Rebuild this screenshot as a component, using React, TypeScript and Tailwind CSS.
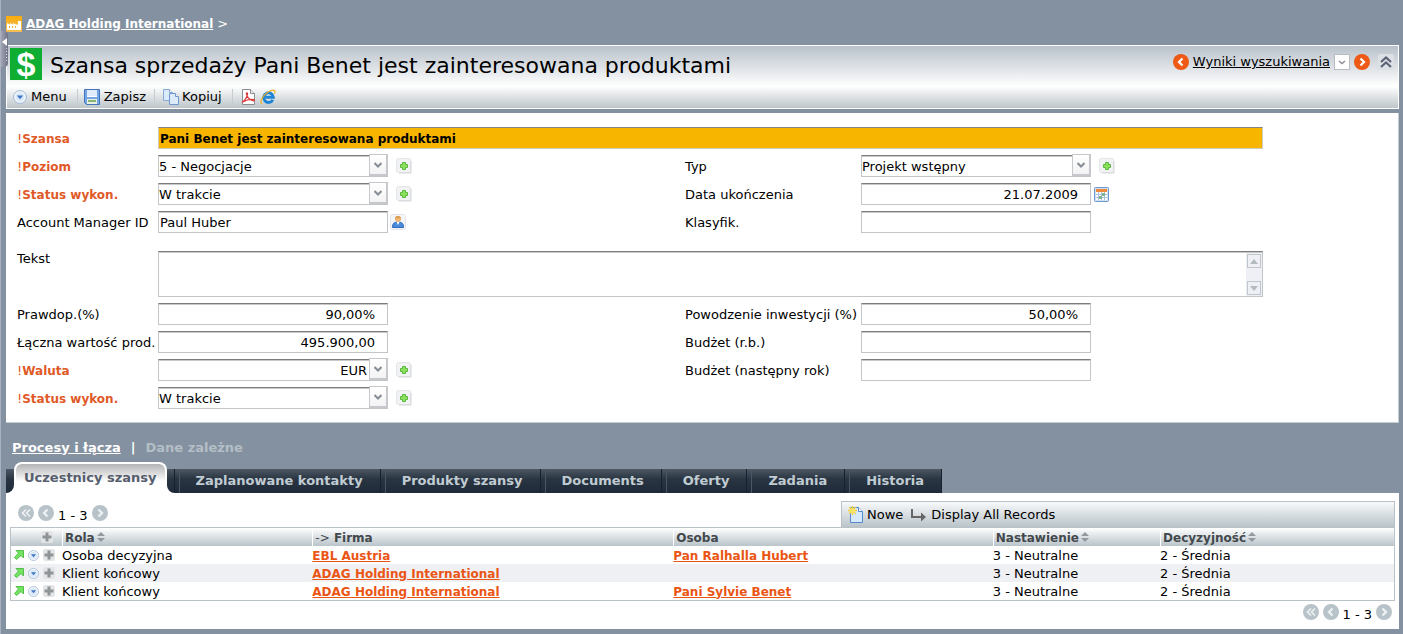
import { useState, type ReactNode } from "react";

function FactoryIcon() {
  return (
    <svg width="16" height="16" viewBox="0 0 16 16" aria-hidden="true">
      <defs>
        <linearGradient id="factory" x1="0" y1="0" x2="0" y2="1">
          <stop offset="0" stopColor="#f7ab0c" />
          <stop offset="1" stopColor="#f5bd55" />
        </linearGradient>
      </defs>
      <rect width="16" height="16" fill="url(#factory)" />
      <path d="M1 14V7l3 1.500V7l3 1.500V7l3 1.500h2V5h3v9z" fill="#fff" />
      <path d="M3 10h1v2H3zM6 10h1v2H6zM9 10h1v2H9z" fill="#f3ae33" />
    </svg>
  );
}

function RoundMenuIcon({ size = 14 }: { size?: number }) {
  return (
    <svg width={size} height={size} viewBox="0 0 14 14" aria-hidden="true">
      <circle cx="7" cy="7" r="6.400" fill="#f3f8fd" stroke="#9fb6d2" />
      <circle cx="7" cy="7" r="4.500" fill="#dbe8f7" />
      <path d="M3.800 5.500h6.400L7 9.200z" fill="#3f74c4" />
    </svg>
  );
}

function SaveIcon() {
  return (
    <svg width="16" height="16" viewBox="0 0 16 16" aria-hidden="true">
      <path d="M.5.5h15v15h-13l-2-2z" fill="#74a6e6" stroke="#4274bb" />
      <rect x="3" y="1" width="10" height="6" fill="#dfeafa" />
      <path d="M3 7.500h10" stroke="#fff" />
      <rect x="3" y="10" width="10" height="5" fill="#e9efe4" />
      <rect x="4" y="11" width="8" height="2" fill="#86b56f" />
    </svg>
  );
}

function CopyIcon() {
  return (
    <svg width="17" height="16" viewBox="0 0 17 16" aria-hidden="true">
      <path d="M.5.5h6l3 3v8h-9z" fill="#dcebfb" stroke="#86a9d8" />
      <path d="M6.500.5v3h3" fill="#fff" stroke="#86a9d8" />
      <path d="M6.500 4.500h6l3 3v8h-9z" fill="#dcebfb" stroke="#7196cc" />
      <path d="M12.500 4.500v3h3" fill="#fff" stroke="#7196cc" />
    </svg>
  );
}

function PdfIcon() {
  return (
    <svg width="15" height="16" viewBox="0 0 15 16" aria-hidden="true">
      <path d="M1.500.5h8l4 4v11h-12z" fill="#fff" stroke="#8e8e92" />
      <path d="M9.500.5v4h4" fill="#eee" stroke="#8e8e92" />
      <path
        d="M.8 13.200C3 12.500 6.200 8.500 6.600 5c.1-1.600-1.500-1.500-1.200 0C6 8 9 11.500 12.500 11.800c1.400 0 1.300-1.200-.2-1.300-3.500-.2-8 1-10.500 2.500"
        fill="none"
        stroke="#e0373b"
        strokeWidth="1.200"
      />
    </svg>
  );
}

function BrowserIcon() {
  return (
    <svg width="16" height="16" viewBox="0 0 16 16" aria-hidden="true">
      <path
        d="M12.800 10.800A4.800 4.800 0 1 1 13.300 8.300H5.500"
        fill="none"
        stroke="#1f84d6"
        strokeWidth="3"
      />
      <path
        d="M2.200 14.600C-.6 13.400 1.700 8.300 6 4.600 10 1.200 14.700.2 15 2.300c.1.900-.3 1.700-.7 2.300"
        fill="none"
        stroke="#eeb21d"
        strokeWidth="1.200"
      />
    </svg>
  );
}

function CircleArrow({ dir, tone }: { dir: "left" | "right" | "first"; tone: "orange" | "grey" }) {
  const shapes = {
    left: "M9.500 4.500 6 8l3.500 3.500",
    right: "M6.500 4.500 10 8l-3.500 3.500",
    first: "M8 4.500 4.500 8 8 11.500M12 4.500 8.500 8l3.500 3.500",
  };
  return (
    <svg width="16" height="16" viewBox="0 0 16 16" aria-hidden="true">
      <circle cx="8" cy="8" r="8" fill={tone === "orange" ? "#ee5a16" : "#b8c3c9"} />
      <path
        d={shapes[dir]}
        fill="none"
        stroke={tone === "orange" ? "#fff" : "#eef2f4"}
        strokeWidth={dir === "first" ? 1.6 : 2.2}
      />
    </svg>
  );
}

function CollapseIcon() {
  return (
    <svg width="16" height="16" viewBox="0 0 16 16" aria-hidden="true">
      <rect width="16" height="16" rx="2" fill="#dde1e6" />
      <path d="m3 8 5-4.500L13 8M3 13l5-4.500L13 13" fill="none" stroke="#5c6377" strokeWidth="2.200" />
    </svg>
  );
}

function PlusIcon() {
  return (
    <svg width="16" height="16" viewBox="0 0 16 16" aria-hidden="true">
      <rect x=".5" y=".5" width="14" height="14" rx="2" fill="#f1f2f4" stroke="#e3e5e8" />
      <path d="M15 3v12H3" fill="none" stroke="#d2d5d9" />
      <path d="M6.500 4.500h3v2h2v3h-2v2h-3v-2h-2v-3h2z" fill="#8be05c" stroke="#5cb83f" />
    </svg>
  );
}

function PersonIcon() {
  return (
    <svg width="16" height="16" viewBox="0 0 16 16" aria-hidden="true">
      <rect x=".5" y=".5" width="15" height="15" rx="2" fill="#f4f5f8" stroke="#e2e4ea" />
      <path d="M2.500 13.500c0-4 1.500-5.500 5.500-5.500s5.500 1.500 5.500 5.500z" fill="#4b8bdc" stroke="#2f6abb" />
      <path d="M6.500 8h3L8 11z" fill="#fff" />
      <circle cx="8" cy="5" r="3" fill="#f0b878" />
      <path d="M5 5a3 3 0 0 1 6 0C9.500 4 7 3.600 5 5z" fill="#dc9a4c" />
    </svg>
  );
}

function CalendarIcon() {
  return (
    <svg width="15" height="15" viewBox="0 0 15 15" aria-hidden="true">
      <rect x=".5" y=".5" width="14" height="14" rx="1" fill="#cfe0f5" stroke="#6d97cf" />
      <rect x="2" y="2" width="11" height="3" fill="#ef8a3c" />
      <path d="M2 5h11v8H2z" fill="#fff" />
      <path d="M2 7.500h11M2 10.500h11M4.500 5v8M7.500 5v8M10.500 5v8" stroke="#a9c0da" />
      <path d="M5 9h3v3H5zM8 6h3v3H8z" fill="#69a877" fillOpacity=".8" />
    </svg>
  );
}

function NewPageIcon() {
  return (
    <svg width="15" height="17" viewBox="0 0 15 17" aria-hidden="true">
      <path d="M2.500 1.500h8l4 4v11h-12z" fill="#d6e8fb" stroke="#5588cc" />
      <path d="M10.500 1.500v4h4" fill="#fff" stroke="#5588cc" />
      <path d="M4.500 0v9M0 4.500h9M1.300 1.300l6.400 6.400M7.700 1.300 1.300 7.700" stroke="#f5d23c" strokeWidth="1.400" />
      <circle cx="4.500" cy="4.500" r="2.500" fill="#fbe564" />
    </svg>
  );
}

function BranchArrowIcon() {
  return (
    <svg width="16" height="14" viewBox="0 0 16 14" aria-hidden="true">
      <path d="M1 1v8h10" fill="none" stroke="#666" strokeWidth="2" />
      <path d="m10 4.500 5 4.500-5 4.500z" fill="#666" />
    </svg>
  );
}

function OpenIcon() {
  return (
    <svg width="10" height="10" viewBox="0 0 10 10" aria-hidden="true">
      <path d="M2 .5h7.500V8L7 5.500 2.500 9.500l-2-2L4.500 3z" fill="#72e45f" stroke="#52bd4a" />
    </svg>
  );
}

function GreyPlus() {
  return (
    <svg width="12" height="12" viewBox="0 0 12 12" aria-hidden="true">
      <rect width="12" height="12" rx="2" fill="#e3e5e7" />
      <path d="M4.500 1.500h3v3h3v3h-3v3h-3v-3h-3v-3h3z" fill="#8f9497" />
    </svg>
  );
}

function SortIcon() {
  return (
    <svg className="ml-0.5 inline-block align-baseline" width="8" height="10" viewBox="0 0 8 10" aria-hidden="true">
      <path d="M0 4h8L4 0zM0 6h8l-4 4z" fill="#929aa0" />
    </svg>
  );
}

function FieldLabel({ id, required, children }: { id: string; required?: boolean; children: ReactNode }) {
  return (
    <label
      htmlFor={id}
      className={
        required
          ? "self-center pt-px text-xs leading-4 font-bold whitespace-nowrap text-[#df5a28]"
          : "self-center pt-px whitespace-nowrap text-black"
      }
    >
      {required && <span className="text-[13px] font-normal">!</span>}
      {children}
    </label>
  );
}

function TextField({ id, value = "", right }: { id: string; value?: string; right?: boolean }) {
  return (
    <input
      id={id}
      type="text"
      defaultValue={value}
      className={
        right
          ? "h-[22px] w-[230px] border border-[#c3c6c8] border-t-[#7d7d7d] bg-white pr-3 text-right shadow-[inset_0_1px_#c9c9c9] outline-none"
          : "h-[22px] w-[230px] border border-[#c3c6c8] border-t-[#7d7d7d] bg-white px-px shadow-[inset_0_1px_#c9c9c9] outline-none"
      }
    />
  );
}

function SelectField({ id, value, right }: { id: string; value: string; right?: boolean }) {
  return (
    <div className="flex items-center gap-2">
      <div className="relative">
        <select
          id={id}
          className={
            right
              ? "block h-[22px] w-[230px] appearance-none border border-[#c3c6c8] border-t-[#7d7d7d] bg-white pt-0.5 pr-5 shadow-[inset_0_1px_#c9c9c9] outline-none [text-align-last:right]"
              : "block h-[22px] w-[230px] appearance-none border border-[#c3c6c8] border-t-[#7d7d7d] bg-white pt-0.5 pr-5 shadow-[inset_0_1px_#c9c9c9] outline-none"
          }
        >
          <option>{value}</option>
        </select>
        <span className="pointer-events-none absolute -top-px right-0 flex h-[22px] w-[19px] items-center justify-center border border-r-2 border-b-2 border-[#c6c8cb] bg-linear-to-b from-white to-[#f3f3f5]">
          <svg width="8" height="6" viewBox="0 0 8 6" aria-hidden="true">
            <path d="M.5 1 4 4.500 7.500 1" fill="none" stroke="#868c94" strokeWidth="2" />
          </svg>
        </span>
      </div>
      <button type="button" aria-label="Dodaj">
        <PlusIcon />
      </button>
    </div>
  );
}

const tabs = ["Zaplanowane kontakty", "Produkty szansy", "Documents", "Oferty", "Zadania", "Historia"];

const rows = [
  { role: "Osoba decyzyjna", company: "EBL Austria", person: "Pan Ralhalla Hubert" },
  { role: "Klient końcowy", company: "ADAG Holding International", person: "" },
  { role: "Klient końcowy", company: "ADAG Holding International", person: "Pani Sylvie Benet" },
];

function Pager() {
  return (
    <div className="flex h-4 items-center gap-1">
      <button type="button" aria-label="Pierwsza strona">
        <CircleArrow dir="first" tone="grey" />
      </button>
      <button type="button" aria-label="Poprzednia strona">
        <CircleArrow dir="left" tone="grey" />
      </button>
      <span className="pt-1.5 whitespace-nowrap">1 - 3</span>
      <button type="button" aria-label="Następna strona">
        <CircleArrow dir="right" tone="grey" />
      </button>
    </div>
  );
}

function Toolbar() {
  return (
    <div className="flex h-4 items-center text-[13px]">
      <button type="button" className="flex items-center gap-1 pr-2.5">
        <RoundMenuIcon />
        Menu
      </button>
      <button type="button" className="flex items-center gap-1 border-l border-[#c5cccf] pr-2 pl-1.5">
        <SaveIcon />
        Zapisz
      </button>
      <button type="button" className="flex items-center gap-0.5 border-l border-[#c5cccf] pr-2.5 pl-2">
        <CopyIcon />
        Kopiuj
      </button>
      <div className="flex gap-1 border-l border-[#c5cccf] pl-2">
        <button type="button" aria-label="PDF">
          <PdfIcon />
        </button>
        <button type="button" aria-label="Otwórz w przeglądarce">
          <BrowserIcon />
        </button>
      </div>
    </div>
  );
}

function OpportunityForm() {
  return (
    <form className="grid grid-cols-[141px_527fr_176px_402fr] gap-y-1.5 border-r border-b border-[#c3ccd0] bg-white pt-3.5 pr-[135px] pb-[13px] pl-[11px]">
      <FieldLabel id="szansa" required>Szansa</FieldLabel>
      <input
        id="szansa"
        type="text"
        defaultValue="Pani Benet jest zainteresowana produktami"
        className="col-span-3 h-[22px] border border-[#d0cdbf] border-t-[#848484] bg-[#f7b500] px-px pt-0.5 text-xs font-bold outline-none"
      />

      <FieldLabel id="poziom" required>Poziom</FieldLabel>
      <SelectField id="poziom" value="5 - Negocjacje" />
      <FieldLabel id="typ">Typ</FieldLabel>
      <SelectField id="typ" value="Projekt wstępny" />

      <FieldLabel id="status1" required>Status wykon.</FieldLabel>
      <SelectField id="status1" value="W trakcie" />
      <FieldLabel id="data">Data ukończenia</FieldLabel>
      <div className="flex items-center gap-[3px]">
        <TextField id="data" value="21.07.2009" right />
        <button type="button" aria-label="Kalendarz">
          <CalendarIcon />
        </button>
      </div>

      <FieldLabel id="manager">Account Manager ID</FieldLabel>
      <div className="flex items-center gap-0.5">
        <TextField id="manager" value="Paul Huber" />
        <button type="button" aria-label="Wybierz osobę">
          <PersonIcon />
        </button>
      </div>
      <FieldLabel id="klasyfik">Klasyfik.</FieldLabel>
      <TextField id="klasyfik" />

      <label htmlFor="tekst" className="mt-3">Tekst</label>
      <div className="col-span-3 mt-3 flex h-[46px] border border-[#c3c6c8] border-t-[#7d7d7d] shadow-[inset_0_1px_#c9c9c9]">
        <textarea id="tekst" className="min-w-0 flex-1 resize-none outline-none" />
        <div className="mt-px flex w-4 flex-col justify-between bg-[#eef0f5] p-px">
          <button type="button" aria-label="W górę" className="flex h-3.5 items-center justify-center border border-[#bfc6cc]">
            <svg width="8" height="5" viewBox="0 0 8 5" aria-hidden="true">
              <path d="M0 5h8L4 0z" fill="#b4bbc0" />
            </svg>
          </button>
          <button type="button" aria-label="W dół" className="flex h-3.5 items-center justify-center border border-[#bfc6cc]">
            <svg width="8" height="5" viewBox="0 0 8 5" aria-hidden="true">
              <path d="M0 0h8L4 5z" fill="#b4bbc0" />
            </svg>
          </button>
        </div>
      </div>

      <FieldLabel id="prawdop">Prawdop.(%)</FieldLabel>
      <TextField id="prawdop" value="90,00%" right />
      <FieldLabel id="powodzenie">Powodzenie inwestycji (%)</FieldLabel>
      <TextField id="powodzenie" value="50,00%" right />

      <FieldLabel id="wartosc">Łączna wartość prod.</FieldLabel>
      <TextField id="wartosc" value="495.900,00" right />
      <FieldLabel id="budzet1">Budżet (r.b.)</FieldLabel>
      <TextField id="budzet1" />

      <FieldLabel id="waluta" required>Waluta</FieldLabel>
      <SelectField id="waluta" value="EUR" right />
      <FieldLabel id="budzet2">Budżet (następny rok)</FieldLabel>
      <TextField id="budzet2" />

      <FieldLabel id="status2" required>Status wykon.</FieldLabel>
      <SelectField id="status2" value="W trakcie" />
    </form>
  );
}

function HeaderCell({ sortable, children }: { sortable?: boolean; children: ReactNode }) {
  return (
    <th className="p-0 text-left text-xs font-bold whitespace-nowrap text-[#43484d]">
      <span className="ml-px block border-l border-white pt-px pl-0.5 leading-4">
        {children}
        {sortable && <SortIcon />}
      </span>
    </th>
  );
}

export default function App() {
  const [active, setActive] = useState("Uczestnicy szansy");

  return (
    <div className="relative min-h-screen border-l border-[#a9b2c2] bg-[#8491a0] pr-1 pb-[5px] pl-[5px] font-['Verdana','DejaVu_Sans',sans-serif] text-[13px] leading-4 text-black">
      <button
        type="button"
        aria-label="Zwiń panel"
        className="absolute top-[31px] left-0 h-9 w-[7px] rounded-r bg-linear-to-r from-[#a3a5b3] to-[#6f7486]"
      >
        <svg width="7" height="36" viewBox="0 0 7 36" aria-hidden="true">
          <path d="M6 7v8L1 11z" fill="#fff" />
          <path d="M5.500 17v14" stroke="#d9dbe2" strokeDasharray="1 2" />
        </svg>
      </button>

      <nav className="flex h-[45px] items-center gap-1 pt-0.5 text-white">
        <FactoryIcon />
        <a href="#firma" className="text-xs leading-4 font-bold underline">ADAG Holding International</a>
        <span>&gt;</span>
      </nav>

      <header className="mb-1 flex justify-between border border-white bg-linear-to-b from-[#b9c2ca] via-white via-65% to-[#bdc6ca] pt-0.5 pr-1 pb-[3px] pl-[3px]">
        <div className="min-w-0">
          <div className="mb-[9px] flex h-8 items-center gap-2">
            <span
              aria-hidden="true"
              className="flex size-8 items-center justify-center bg-[#0fae32] font-['Liberation_Sans',sans-serif] text-[34px] leading-9 font-bold text-white"
            >
              $
            </span>
            <h1 className="pt-1 text-[22px] leading-8 whitespace-nowrap">
              Szansa sprzedaży Pani Benet jest zainteresowana produktami
            </h1>
          </div>
          <div className="pl-[3px]">
            <Toolbar />
          </div>
        </div>
        <div className="mt-1.5 flex h-4 items-center gap-1">
          <button type="button" aria-label="Poprzedni">
            <CircleArrow dir="left" tone="orange" />
          </button>
          <a href="#wyniki" className="whitespace-nowrap underline">Wyniki wyszukiwania</a>
          <button
            type="button"
            aria-label="Lista wyników"
            className="flex size-4 items-center justify-center border border-[#b9bcc0] bg-white"
          >
            <svg width="8" height="5" viewBox="0 0 8 5" aria-hidden="true">
              <path d="M1 1l3 2.500L7 1" fill="none" stroke="#8a8e94" strokeWidth="1.500" />
            </svg>
          </button>
          <button type="button" aria-label="Następny">
            <CircleArrow dir="right" tone="orange" />
          </button>
          <button type="button" aria-label="Zwiń" className="ml-1">
            <CollapseIcon />
          </button>
        </div>
      </header>

      <OpportunityForm />

      <nav className="flex h-[39px] items-center gap-2.5 pt-2.5 pl-1.5 font-bold text-white">
        <a href="#procesy" className="underline">Procesy i łącza</a>
        <span>|</span>
        <a href="#dane" className="text-[#b3bec6]">Dane zależne</a>
      </nav>

      <div className="flex h-[31px] items-end">
        <div className="h-6 w-2 shrink-0 bg-white">
          <div className="h-6 rounded-br-lg bg-linear-to-b from-[#4e5863] via-[#2b3644] via-40% to-[#1e2939]" />
        </div>
        <button
          type="button"
          onClick={() => setActive("Uczestnicy szansy")}
          className="h-[31px] shrink-0 rounded-t-lg border-x-2 border-t-2 border-white bg-linear-to-b from-[#b4b4b6] to-white to-60% px-2 pb-0.5 font-bold whitespace-nowrap text-[#555d6d]"
        >
          Uczestnicy szansy
        </button>
        <div className="h-6 w-2 shrink-0 bg-white">
          <div className="h-6 rounded-bl-lg border-r border-[#16202e] bg-linear-to-b from-[#4e5863] via-[#2b3644] via-40% to-[#1e2939]" />
        </div>
        <div className="flex h-6 bg-linear-to-b from-[#4e5863] via-[#2b3644] via-40% to-[#1e2939]">
          {tabs.map((tab) => (
            <button
              key={tab}
              type="button"
              aria-pressed={active === tab}
              onClick={() => setActive(tab)}
              className="flex items-center border-r border-[#16202e] pr-[17px] font-bold whitespace-nowrap text-[#c0ccd2]"
            >
              <span className="mr-4 ml-1 h-6 border-l border-[#4b5664]" />
              {tab}
            </button>
          ))}
        </div>
      </div>

      <section className="bg-white px-1 pt-2 pb-[9px]">
        <div className="flex justify-between">
          <div className="pt-1 pl-2">
            <Pager />
          </div>
          <div className="flex h-[26px] w-2/5 items-center gap-2 border border-b-0 border-[#b9c3c7] bg-linear-to-b from-[#f8f9fa] to-[#b9c4ca] pl-1.5">
            <button type="button" className="flex items-center gap-1 whitespace-nowrap">
              <NewPageIcon />
              Nowe
            </button>
            <button type="button" className="flex items-center gap-1 whitespace-nowrap">
              <BranchArrowIcon />
              Display All Records
            </button>
          </div>
        </div>
        <div className="border border-[#b9c3c7]">
          <table className="w-full table-fixed border-collapse">
            <colgroup>
              <col className="w-[50px]" />
              <col className="w-[18.1%]" />
              <col className="w-[26.1%]" />
              <col className="w-[23.1%]" />
              <col className="w-[12.1%]" />
              <col />
            </colgroup>
            <thead>
              <tr className="h-[18px] bg-linear-to-b from-white to-[#b9c4ca]">
                <th className="p-0">
                  <button type="button" aria-label="Rozwiń wszystkie" className="ml-[30px] block">
                    <GreyPlus />
                  </button>
                </th>
                <HeaderCell sortable>Rola</HeaderCell>
                <HeaderCell>
                  <span className="font-normal">-&gt;</span> Firma
                </HeaderCell>
                <HeaderCell>Osoba</HeaderCell>
                <HeaderCell sortable>Nastawienie</HeaderCell>
                <HeaderCell sortable>Decyzyjność</HeaderCell>
              </tr>
            </thead>
            <tbody>
              {rows.map((row, i) => (
                <tr key={i} className="h-[18px] even:bg-[#eff0f4]">
                  <td className="p-0">
                    <div className="flex items-center gap-1 pl-[3px]">
                      <button type="button" aria-label="Otwórz">
                        <OpenIcon />
                      </button>
                      <button type="button" aria-label="Menu wiersza">
                        <RoundMenuIcon size={11} />
                      </button>
                      <button type="button" aria-label="Rozwiń">
                        <GreyPlus />
                      </button>
                    </div>
                  </td>
                  <td className="px-px pt-px pb-0">{row.role}</td>
                  <td className="px-px pt-px pb-0 text-xs leading-4">
                    <a href="#firma" className="font-bold text-[#ea5514] underline">{row.company}</a>
                  </td>
                  <td className="px-px pt-px pb-0 text-xs leading-4">
                    {row.person && (
                      <a href="#osoba" className="font-bold text-[#ea5514] underline">{row.person}</a>
                    )}
                  </td>
                  <td className="px-px pt-px pb-0">3 - Neutralne</td>
                  <td className="px-px pt-px pb-0">2 - Średnia</td>
                </tr>
              ))}
            </tbody>
          </table>
        </div>
        <div className="flex justify-end pt-[3px] pr-[3px]">
          <Pager />
        </div>
      </section>
    </div>
  );
}
